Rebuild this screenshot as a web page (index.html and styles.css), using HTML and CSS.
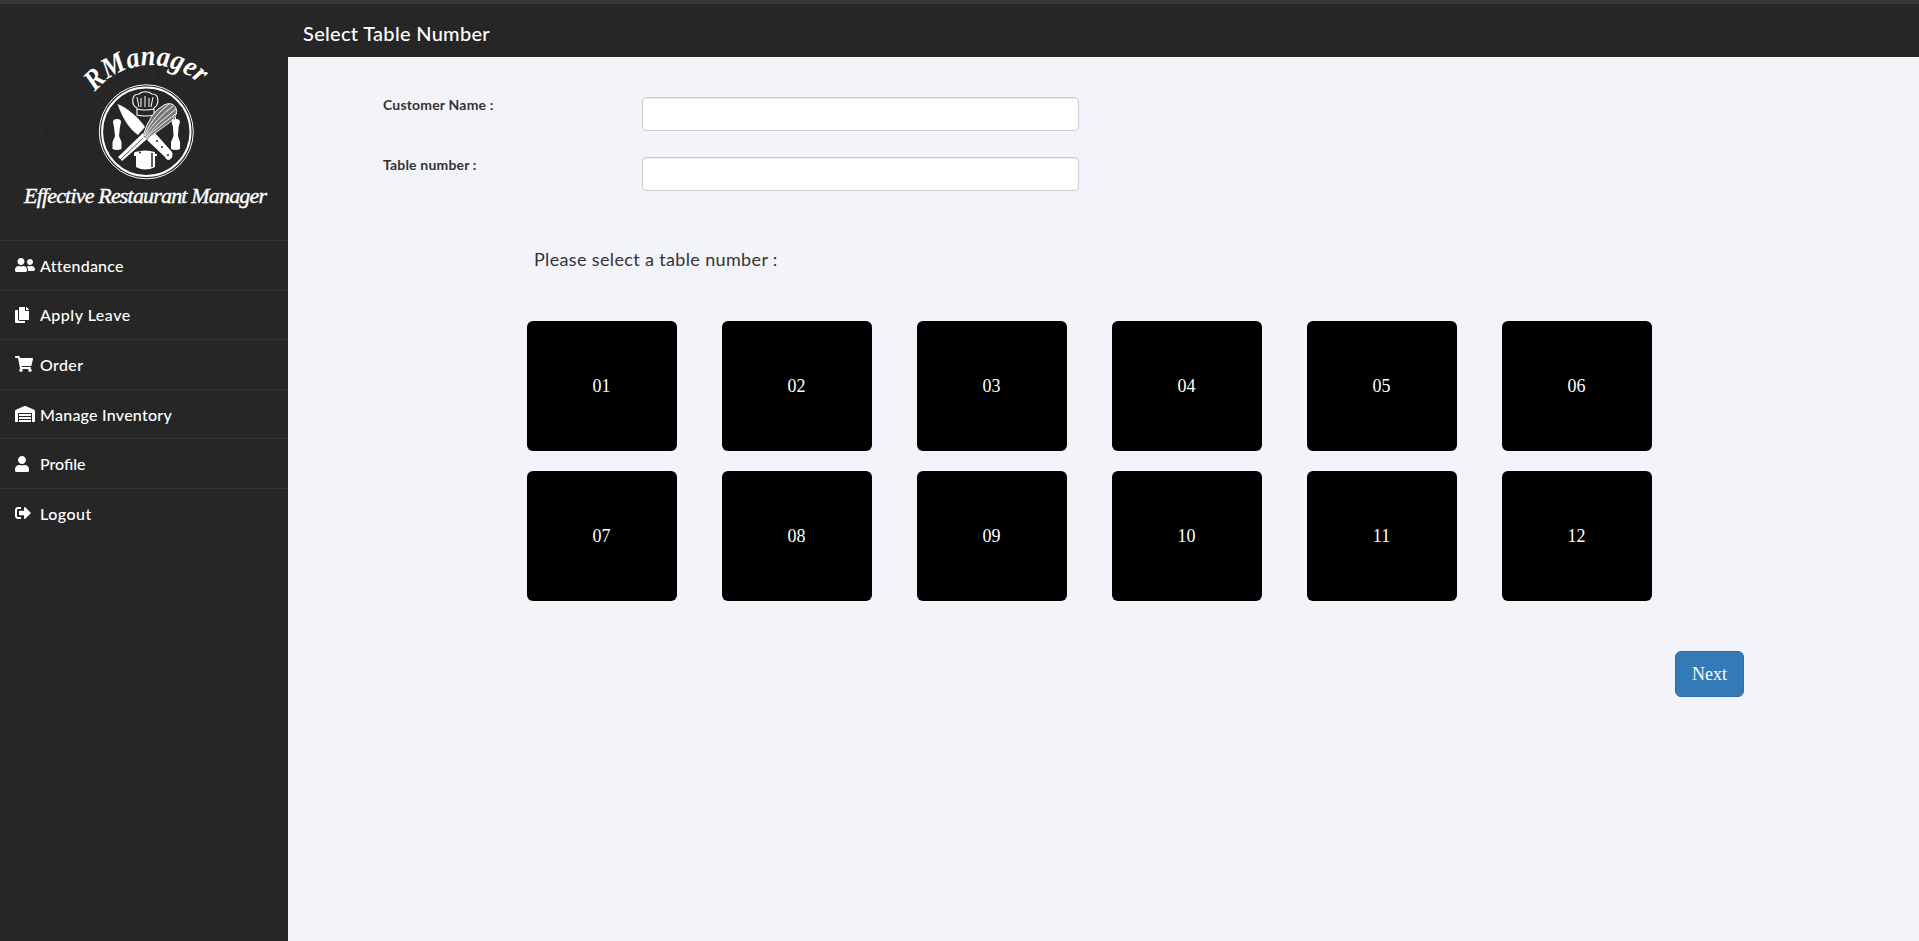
FILE: index.html
```html
<!DOCTYPE html>
<html lang="en">
<head>
<meta charset="utf-8">
<title>Select Table Number</title>
<link rel="stylesheet" href="styles.css">
</head>
<body>
<div class="app">
  <aside class="sidebar">
    <svg class="logo" viewBox="0 0 288 236" width="288" height="236">
      <defs><path id="arc" d="M95 88 A72 72 0 0 1 212 95"/></defs>
      <g fill="#fff">
        <text class="script" font-size="29"><textPath href="#arc" textLength="117" lengthAdjust="spacingAndGlyphs">RManager</textPath></text>
        <text class="script tagline" x="24" y="199" font-size="22" textLength="243">Effective Restaurant Manager</text>
      </g>
      <g transform="translate(0 -4)">
        <g fill="none" stroke="#fff">
          <circle cx="146.3" cy="131.8" r="47" stroke-width="1"/>
          <circle cx="146.3" cy="131.8" r="44.2" stroke-width="2"/>
          <path d="M137 115V108C131 105 131 94 139 94C142 91 149 91 152 94C160 94 159 105 154 108V115Q145 117 137 115ZM137 109Q145 111 154 109" stroke-width="1.1"/>
          <path d="M137 97L139 107M141 98V107M145 96V107M149 98V107M153 97L151 107" stroke-width="1"/>
        </g>
        <g fill="#fff">
          <path d="M117.500 104C128 108 139 118 145 127L138 135C129 129 122 117 117.500 104Z"/>
          <path d="M151 136L155 133L172 152Q174 157 169 160Q166 160 165 157L147 140Z"/>
          <path d="M143 133L147 139L122 161L118 157Z"/>
          <path d="M113 122Q113 119 117 119Q121 119 121 122L120 127L119 136L121.500 142V149Q117 151 112.500 149V142L115 136L114 127Z"/>
          <path d="M171.500 122Q172 119 175 119V117H176V119Q180 119 180 122L178.500 127L178 136L180 142V149Q176 151 171 149V142L173.500 136L173 127Z"/>
          <path d="M135 152Q145 149 155 152V154H157V156H155V167Q145 172 136 167V156H134V153Z"/>
        </g>
        <path d="M152 153V167" stroke="#262626" stroke-width="1.500"/>
        <path d="M143 138L120 160M137 137L146 128" stroke="#262626" stroke-width=".8"/>
        <g fill="#262626"><circle cx="157" cy="141" r="1"/><circle cx="162" cy="147" r="1"/><circle cx="168" cy="155" r="1"/><circle cx="140" cy="152.500" r="1"/></g>
        <path d="M143 136Q150 112 164 105Q172 101 176 108Q179 115 169 123Q158 131 147 139Z" fill="#777"/>
        <path d="M143 136Q150 112 164 105Q172 101 176 108Q179 115 169 123Q158 131 147 139M144 136Q153 116 169 104M145 136Q157 118 173 106M146 137Q158 122 176 109M146 138Q158 127 177 113" fill="none" stroke="#fff" stroke-width=".9"/>
      </g>
      <g fill="#343434"><circle cx="125" cy="44" r="1"/><circle cx="139" cy="44" r="1"/><circle cx="153" cy="44" r="1"/><circle cx="139" cy="71" r="1"/><circle cx="153" cy="71" r="1"/><circle cx="41" cy="126" r="1"/><circle cx="41" cy="139.500" r="1"/><circle cx="97" cy="98.500" r="1"/><circle cx="195" cy="98.500" r="1"/></g>
      <path d="M55 180H252" stroke="#343434" stroke-width="2" stroke-linecap="round" stroke-dasharray="0 14"/>
    </svg>
    <nav class="menu">
      <a class="item"><svg class="icon" viewBox="0 0 640 512" width="20"><path d="M192 256c61.900 0 112-50.100 112-112S253.900 32 192 32 80 82.100 80 144s50.100 112 112 112zm76.800 32h-8.300c-20.800 10-43.900 16-68.500 16s-47.600-6-68.500-16h-8.300C51.600 288 0 339.600 0 403.200V432c0 26.500 21.500 48 48 48h288c26.500 0 48-21.500 48-48v-28.800c0-63.600-51.600-115.200-115.200-115.200zM480 256c53 0 96-43 96-96s-43-96-96-96-96 43-96 96 43 96 96 96zm48 32h-3.800c-13.900 4.800-28.600 8-44.200 8s-30.300-3.200-44.200-8H432c-20.400 0-39.200 5.900-55.700 15.400 24.400 26.300 39.700 61.200 39.700 99.800v38.400c0 2.200-.5 4.300-.6 6.400H592c26.500 0 48-21.500 48-48 0-61.900-50.100-112-112-112z"/></svg><span class="attendance">Attendance</span></a>
      <a class="item"><svg class="icon" viewBox="0 0 448 512" width="14"><path d="M320 448v40c0 13.255-10.745 24-24 24H24c-13.255 0-24-10.745-24-24V120c0-13.255 10.745-24 24-24h72v296c0 30.879 25.121 56 56 56h168zm0-344V0H152c-13.255 0-24 10.745-24 24v368c0 13.255 10.745 24 24 24h272c13.255 0 24-10.745 24-24V128H344c-13.200 0-24-10.800-24-24zm120.971-31.029L375.029 7.029A24 24 0 0 0 358.059 0H352v96h96v-6.059a24 24 0 0 0-7.029-16.970z"/></svg><span class="leave">Apply Leave</span></a>
      <a class="item"><svg class="icon" viewBox="0 0 576 512" width="18"><path d="M528.120 301.319l47.273-208C578.806 78.301 567.391 64 551.990 64H159.208l-9.166-44.810C147.758 8.021 137.930 0 126.529 0H24C10.745 0 0 10.745 0 24v16c0 13.255 10.745 24 24 24h69.883l70.248 343.435C147.325 417.100 136 435.222 136 456c0 30.928 25.072 56 56 56s56-25.072 56-56c0-15.674-6.447-29.835-16.824-40h209.647C430.447 426.165 424 440.326 424 456c0 30.928 25.072 56 56 56s56-25.072 56-56c0-22.172-12.888-41.332-31.579-50.405l5.517-24.276c3.413-15.018-8.002-29.319-23.403-29.319H218.117l-6.545-32h293.145c11.206 0 20.920-7.754 23.403-18.681z"/></svg><span class="order">Order</span></a>
      <a class="item"><svg class="icon" viewBox="0 0 640 512" width="20"><path d="M504 352H136.400c-4.400 0-8 3.600-8 8l-.1 48c0 4.400 3.600 8 8 8H504c4.400 0 8-3.600 8-8v-48c0-4.400-3.600-8-8-8zm0 96H136.100c-4.400 0-8 3.600-8 8l-.1 48c0 4.400 3.600 8 8 8h368c4.400 0 8-3.600 8-8v-48c0-4.400-3.600-8-8-8zm0-192H136.600c-4.400 0-8 3.600-8 8l-.1 48c0 4.400 3.600 8 8 8H504c4.400 0 8-3.600 8-8v-48c0-4.400-3.600-8-8-8zm106.500-139L338.400 3.700a48.150 48.150 0 0 0-36.900 0L29.500 117C11.700 124.500 0 141.900 0 161.300V504c0 4.400 3.600 8 8 8h80c4.400 0 8-3.600 8-8V256c0-17.600 14.600-32 32.600-32h382.800c18 0 32.600 14.400 32.600 32v248c0 4.400 3.600 8 8 8h80c4.400 0 8-3.600 8-8V161.300c0-19.400-11.700-36.800-29.500-44.300z"/></svg><span class="inventory">Manage Inventory</span></a>
      <a class="item"><svg class="icon" viewBox="0 0 448 512" width="14"><path d="M224 256c70.700 0 128-57.300 128-128S294.700 0 224 0 96 57.300 96 128s57.300 128 128 128zm89.600 32h-16.700c-22.200 10.200-46.900 16-72.900 16s-50.600-5.800-72.900-16h-16.700C60.200 288 0 348.200 0 422.400V464c0 26.500 21.500 48 48 48h352c26.500 0 48-21.500 48-48v-41.600c0-74.200-60.200-134.400-134.400-134.400z"/></svg><span>Profile</span></a>
      <a class="item"><svg class="icon" viewBox="0 0 512 512" width="16"><path d="M497 273L329 441c-15 15-41 4.500-41-17v-96H152c-13.300 0-24-10.700-24-24v-96c0-13.300 10.700-24 24-24h136V88c0-21.400 25.900-32 41-17l168 168c9.300 9.400 9.300 24.600 0 34zM192 436v-40c0-6.600-5.400-12-12-12H96c-17.700 0-32-14.300-32-32V160c0-17.700 14.300-32 32-32h84c6.600 0 12-5.400 12-12V76c0-6.600-5.400-12-12-12H96c-53 0-96 43-96 96v192c0 53 43 96 96 96h84c6.600 0 12-5.400 12-12z"/></svg><span class="logout">Logout</span></a>
    </nav>
  </aside>
  <div class="main">
    <header class="header"><span class="title">Select Table Number</span></header>
    <main class="content">
      <form class="form">
        <div class="row"><label class="label" for="customer">Customer Name :</label><input class="input" id="customer" type="text"></div>
        <div class="row"><label class="label" for="table">Table number :</label><input class="input" id="table" type="text"></div>
      </form>
      <p class="prompt">Please select a table number :</p>
      <div class="tables">
        <button class="tile">01</button><button class="tile">02</button><button class="tile">03</button><button class="tile">04</button><button class="tile">05</button><button class="tile">06</button>
        <button class="tile">07</button><button class="tile">08</button><button class="tile">09</button><button class="tile">10</button><button class="tile">11</button><button class="tile">12</button>
      </div>
      <button class="next">Next</button>
    </main>
  </div>
</div>
</body>
</html>
```

FILE: styles.css
```css
* { box-sizing: border-box; }
body {
  margin: 0;
  height: 941px;
  font-family: Lato, sans-serif;
  color: #333;
  background: #f3f4f9;
  border-top: 4px solid #36373b;
}
.app { display: flex; height: 100%; }
.sidebar { width: 288px; flex: none; background: #262626; }
.logo { display: block; overflow: visible; }
.script { font-family: "Liberation Serif", serif; font-style: italic; font-weight: bold; }
.tagline { font-weight: normal; stroke: #fff; stroke-width: .4px; }
.menu { display: flex; flex-direction: column; }
.item {
  display: flex;
  align-items: center;
  height: 49.6px;
  padding-left: 15px;
  border-top: 1px solid #323232;
  color: #fff;
  font-size: 16px;
  font-weight: 500;
  line-height: 20px;
  white-space: nowrap;
}
.icon { height: 16px; fill: #fff; flex: none; }
.item span { margin-left: auto; width: 248px; padding-top: 1px; }
.attendance { letter-spacing: .25px; }
.leave { letter-spacing: .5px; }
.order { letter-spacing: .35px; }
.inventory { letter-spacing: .25px; }
.logout { letter-spacing: .5px; }
.main { flex: 1; display: flex; flex-direction: column; }
.header {
  height: 53px;
  padding: 17px 0 0 15px;
  background: #262626;
  color: #fff;
  font-size: 20px;
  font-weight: 500;
  line-height: 24px;
}
.title { letter-spacing: .3px; }
.content { flex: 1; display: flex; flex-direction: column; padding-top: 40px; }
.form { display: flex; flex-direction: column; gap: 26px; padding-left: 95px; }
.row { display: flex; }
.label { width: 259px; font-size: 14px; font-weight: bold; line-height: 16px; letter-spacing: .18px; white-space: nowrap; }
.input {
  width: 437px;
  height: 34px;
  padding: 6px 12px;
  border: 1px solid #ccc;
  border-radius: 4px;
  background: #fff;
  box-shadow: inset 0 1px 1px rgba(0, 0, 0, .075);
}
.prompt { margin: 57px 0 0 246px; height: 73px; font-size: 18px; line-height: 23px; letter-spacing: .35px; }
.tables { display: grid; grid-template-columns: repeat(6, 150px); gap: 20px 45px; margin-left: 239px; }
.tile {
  height: 130px;
  padding: 0 1px 0 0;
  border: 0;
  border-radius: 6px;
  background: #000;
  color: #fff;
  font: 18px "Liberation Serif", serif;
}
.next {
  width: 69px;
  height: 46px;
  margin: 50px 0 0 1387px;
  padding: 0;
  border: 1px solid #2e6da4;
  border-radius: 6px;
  background: #337ab7;
  color: #fff;
  font: 18px "Liberation Serif", serif;
}
```
